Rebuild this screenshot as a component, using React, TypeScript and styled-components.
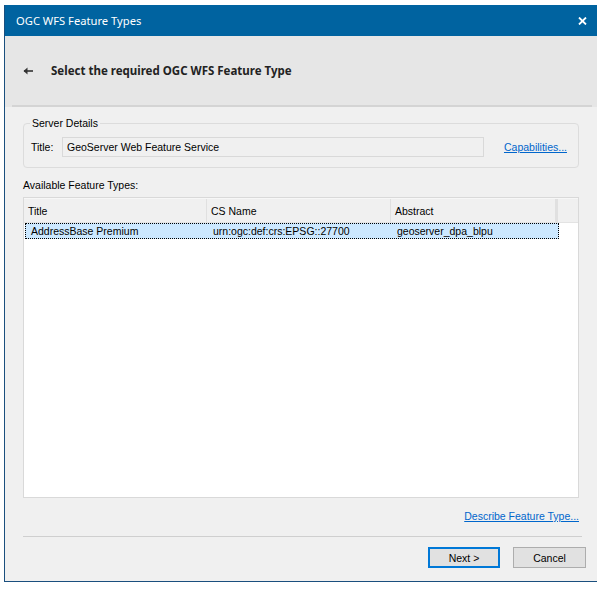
import React from 'react'
import styled, { createGlobalStyle } from 'styled-components'

const GlobalStyle = createGlobalStyle`
    html, body {
        margin: 0;
        padding: 0;
        background: #ffffff;
        overflow: hidden;
    }
    body {
        font-family: "Liberation Sans", Arial, sans-serif;
    }
`

const Page = styled.div`
    padding: 5px 0 0 4px;
    width: 600px;
`

const Window = styled.div`
    width: 596px;
    display: flex;
    flex-direction: column;
    background: #f0f0f0;
    border-left: 1px solid #1a4f7e;
    border-bottom: 1px solid #1a4f7e;
`

const TitleBar = styled.div`
    height: 31px;
    background: #0063a0;
    display: flex;
    align-items: center;
    justify-content: space-between;
    padding: 0 14px 0 11px;
    color: #ffffff;
    font-family: "Noto Sans", "Open Sans", sans-serif;
    font-size: 11.2px;
`

const Header = styled.div`
    height: 69px;
    background: #e6e6e6;
    display: flex;
    align-items: center;
    padding-left: 18px;
    gap: 18px;
    color: #222222;
    font-family: "Noto Sans", "Open Sans", sans-serif;
    font-size: 11.5px;
    font-weight: 700;
`

const HeaderRule = styled.div`
    height: 2px;
    background: #e6e6e6;
    display: flex;
    & > div {
        flex: 1;
        margin: 0 9px 0 7px;
        background: #d4d4d4;
    }
`

const Body = styled.div`
    display: flex;
    flex-direction: column;
    padding: 0 22px 13px 18px;
    font-size: 10.5px;
    color: #000000;
`

const GroupBox = styled.fieldset`
    margin: 10px 0 0 0;
    padding: 7px 11px 10px 7px;
    border: 1px solid #dcdcdc;
    border-radius: 4px;
    display: flex;
    align-items: center;
`

const Legend = styled.legend`
    padding: 0 2px;
    margin-left: -1px;
    line-height: 13px;
    color: #000000;
`

const FieldLabel = styled.span`
    width: 31px;
    flex: none;
`

const ReadOnlyField = styled.div`
    width: 416px;
    height: 18px;
    border: 1px solid #d9d9d9;
    background: #f0f0f0;
    display: flex;
    align-items: center;
    padding-left: 4px;
`

const LinkText = styled.a<{ $push?: boolean }>`
    color: #0066cc;
    text-decoration: underline;
    cursor: pointer;
    line-height: 13px;
    margin-left: ${(p) => (p.$push ? 'auto' : '0')};
`

const SectionLabel = styled.div`
    margin-top: 11px;
    line-height: 13px;
`

const ListView = styled.div`
    margin-top: 5px;
    height: 299px;
    border: 1px solid #d9d9d9;
    background: #ffffff;
    display: flex;
    flex-direction: column;
`

const Columns = styled.div`
    display: grid;
    grid-template-columns: 183px 184px 167px 1fr;
`

const HeaderRow = styled(Columns)`
    height: 23px;
    background: #f0f0f0;
    border-top: 1px solid #f7f7f7;
    border-bottom: 1px solid #e3e3e3;
`

const HeaderCell = styled.div<{ $thick?: boolean }>`
    display: flex;
    align-items: center;
    padding-left: 4px;
    border-right: ${(p) => (p.$thick ? '3px' : '1px')} solid #e0e0e0;
    &:last-child {
        border-right: none;
    }
`

const DataRow = styled(Columns)<{ $selected?: boolean }>`
    height: 14px;
    width: 532px;
    margin-left: 1px;
    align-items: center;
    background: ${(p) => (p.$selected ? '#cce8ff' : 'transparent')};
    border: 1px dotted ${(p) => (p.$selected ? '#000000' : 'transparent')};
    grid-template-columns: 182px 184px 1fr;
`

const DataCell = styled.div`
    padding-left: 5px;
    white-space: nowrap;
    line-height: 14px;
`

const LinkRow = styled.div`
    display: flex;
    margin-top: 12px;
`

const Separator = styled.div`
    height: 1px;
    background: #cfcfcf;
    margin: 13px -3px 0 0;
`

const ButtonRow = styled.div`
    display: flex;
    justify-content: flex-end;
    gap: 13px;
    margin: 10px -7px 0 0;
`

const DialogButton = styled.button<{ $default?: boolean }>`
    width: ${(p) => (p.$default ? '72px' : '73px')};
    height: 21px;
    padding: 0;
    background: #e1e1e1;
    border: ${(p) => (p.$default ? '2px solid #0078d7' : '1px solid #adadad')};
    font-family: "Liberation Sans", Arial, sans-serif;
    font-size: 10.5px;
    color: #000000;
`

const columns = ['Title', 'CS Name', 'Abstract', '']

const rows = [
    { title: 'AddressBase Premium', cs: 'urn:ogc:def:crs:EPSG::27700', abstract: 'geoserver_dpa_blpu' },
]

const CloseIcon = () => (
    <svg width="9" height="8" viewBox="0 0 9 8">
        <path d="M1 0.5 L8 7.5 M8 0.5 L1 7.5" stroke="#ffffff" strokeWidth="1.8" />
    </svg>
)

const BackArrow = () => (
    <svg width="10" height="8" viewBox="0 0 10 8">
        <path d="M1 4 H10" stroke="#333333" strokeWidth="1.6" />
        <path d="M0.5 4 L4.5 0.5 V7.5 Z" fill="#333333" />
    </svg>
)

export default function App() {
    return (
        <Page>
            <GlobalStyle />
            <Window>
                <TitleBar>
                    <span>OGC WFS Feature Types</span>
                    <CloseIcon />
                </TitleBar>
                <Header>
                    <BackArrow />
                    <span>Select the required OGC WFS Feature Type</span>
                </Header>
                <HeaderRule><div /></HeaderRule>

                <Body>
                    <GroupBox>
                        <Legend>Server Details</Legend>
                        <FieldLabel>Title:</FieldLabel>
                        <ReadOnlyField>GeoServer Web Feature Service</ReadOnlyField>
                        <LinkText $push>Capabilities...</LinkText>
                    </GroupBox>

                    <SectionLabel>Available Feature Types:</SectionLabel>
                    <ListView>
                        <HeaderRow>
                            {columns.map((c, i) => (
                                <HeaderCell key={i} $thick={i === 2}>{c}</HeaderCell>
                            ))}
                        </HeaderRow>
                        {rows.map((r) => (
                            <DataRow key={r.title} $selected>
                                <DataCell>{r.title}</DataCell>
                                <DataCell>{r.cs}</DataCell>
                                <DataCell>{r.abstract}</DataCell>
                            </DataRow>
                        ))}
                    </ListView>

                    <LinkRow>
                        <LinkText $push>Describe Feature Type...</LinkText>
                    </LinkRow>
                    <Separator />
                    <ButtonRow>
                        <DialogButton $default>Next &gt;</DialogButton>
                        <DialogButton>Cancel</DialogButton>
                    </ButtonRow>
                </Body>
            </Window>
        </Page>
    )
}
